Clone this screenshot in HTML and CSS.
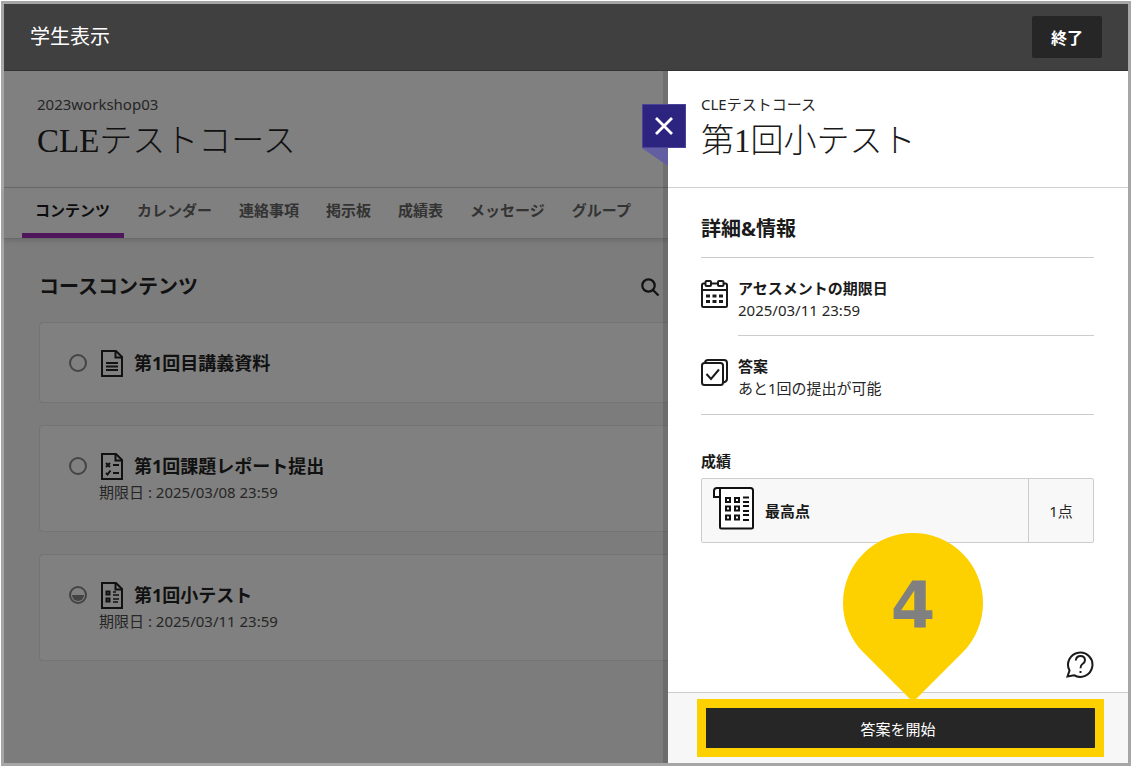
FILE: index.html
```html
<!DOCTYPE html>
<html lang="ja">
<head>
    <meta charset="UTF-8">
    <meta name="viewport" content="width=device-width, initial-scale=1.0">
    <title>第1回小テスト</title>
    <link rel="stylesheet" href="styles.css">
</head>
<body>
    <div class="frame">
        <!-- Student preview bar -->
        <header class="preview-bar">
            <span class="preview-title">学生表示</span>
            <button class="exit-btn" type="button">終了</button>
        </header>

        <div class="workspace">
            <!-- Course page, dimmed behind the panel -->
            <main class="course">
                <div class="course-head">
                    <p class="course-id">2023workshop03</p>
                    <h1 class="title">CLEテストコース</h1>
                </div>

                <nav class="tabs">
                    <a class="tab active" href="#">コンテンツ</a>
                    <a class="tab" href="#">カレンダー</a>
                    <a class="tab" href="#">連絡事項</a>
                    <a class="tab" href="#">掲示板</a>
                    <a class="tab" href="#">成績表</a>
                    <a class="tab" href="#">メッセージ</a>
                    <a class="tab" href="#">グループ</a>
                </nav>

                <section class="contents">
                    <div class="contents-head">
                        <h2>コースコンテンツ</h2>
                        <button class="icon-btn" type="button" aria-label="検索">
                            <svg width="20" height="20" viewBox="0 0 20 20" fill="none" stroke="#111" stroke-width="2.2">
                                <circle cx="8.5" cy="8.5" r="6.2"/>
                                <path d="M13 13l5.5 5.5"/>
                            </svg>
                        </button>
                    </div>

                    <article class="card">
                        <div class="card-row">
                            <span class="status"></span>
                            <svg class="doc-icon" width="22" height="27" viewBox="0 0 22 27" fill="none" stroke="#111" stroke-width="2">
                                <path d="M1 1h14l6 6v19H1z"/>
                                <path d="M14.5 1v6.5H21"/>
                                <path d="M5 13h12M5 16.5h12M5 20h12"/>
                            </svg>
                            <a class="card-title" href="#">第1回目講義資料</a>
                        </div>
                    </article>

                    <article class="card">
                        <div class="card-row">
                            <span class="status"></span>
                            <svg class="doc-icon" width="22" height="27" viewBox="0 0 22 27" fill="none" stroke="#111" stroke-width="2">
                                <path d="M1 1h14l6 6v19H1z"/>
                                <path d="M14.5 1v6.5H21"/>
                                <path d="M5 10l4 4M9 10l-4 4M5 20l1.5 1.5L9.5 17.5M12 12h6M12 20h6"/>
                            </svg>
                            <a class="card-title" href="#">第1回課題レポート提出</a>
                        </div>
                        <p class="due">期限日 : 2025/03/08 23:59</p>
                    </article>

                    <article class="card">
                        <div class="card-row">
                            <span class="status half"></span>
                            <svg class="doc-icon" width="22" height="27" viewBox="0 0 22 27" fill="none" stroke="#111" stroke-width="2">
                                <path d="M1 1h14l6 6v19H1z"/>
                                <path d="M14.5 1v6.5H21"/>
                                <path d="M5.5 9.5h3v3h-3zM5.5 16.5h3v3h-3z"/>
                                <path d="M12 10h3M12 13h6M12 17h6M12 20h5" stroke-width="1.7"/>
                            </svg>
                            <a class="card-title" href="#">第1回小テスト</a>
                        </div>
                        <p class="due">期限日 : 2025/03/11 23:59</p>
                    </article>
                </section>
            </main>

            <!-- Assessment panel -->
            <aside class="panel">
                <button class="close-btn" type="button" aria-label="閉じる">
                    <svg width="20" height="20" viewBox="0 0 20 20" fill="none" stroke="#fff" stroke-width="2.8">
                        <path d="M2 2l16 16M18 2L2 18"/>
                    </svg>
                </button>

                <div class="panel-head">
                    <p class="course-id">CLEテストコース</p>
                    <h1 class="title">第1回小テスト</h1>
                </div>

                <div class="panel-body">
                    <h2>詳細&amp;情報</h2>
                    <div class="detail">
                        <svg width="27" height="28" viewBox="0 0 27 28" fill="none" stroke="#1a1a1a" stroke-width="2">
                            <path d="M4 3.5H2.5Q1 3.5 1 5v20.5Q1 27 2.5 27h22q1.500 0 1.500-1.500V5q0-1.500-1.500-1.500H23M11 3.500h5M1 10h25"/>
                            <rect x="4.5" y="1" width="5.5" height="5" rx="1"/>
                            <rect x="17" y="1" width="5.5" height="5" rx="1"/>
                            <path d="M5 16h4M11.5 16h4M18 16h4M5 21.5h4M11.5 21.5h4M18 21.5h4" stroke-width="3"/>
                        </svg>
                        <div class="detail-text">
                            <h3>アセスメントの期限日</h3>
                            <p>2025/03/11 23:59</p>
                        </div>
                    </div>
                    <div class="detail">
                        <svg width="27" height="28" viewBox="0 0 27 28" fill="none" stroke="#1a1a1a" stroke-width="2">
                            <rect x="1" y="5" width="21" height="22" rx="2.5"/>
                            <path d="M4 4.5Q4.5 2 7 2h16q3 0 3 3v16q0 2.5-3.5 3.5"/>
                            <path d="M5.5 16l4.5 5 8-9.5"/>
                        </svg>
                        <div class="detail-text last">
                            <h3>答案</h3>
                            <p>あと1回の提出が可能</p>
                        </div>
                    </div>

                    <h3 class="grade-label">成績</h3>
                    <div class="grade">
                        <div class="grade-name">
                            <svg width="42" height="44" viewBox="0 0 42 44" stroke="#111" stroke-width="2" fill="#fff">
                                <path d="M7 3v38q0 1.500 1.500 1.500h30q1.500 0 1.500-1.500V4.500Q40 2 37.500 2H4Q1 2 1 5v6h6"/>
                                <path d="M13 12h4v4h-4zM22 12h4v4h-4zM13 20.500h4v4h-4zM22 20.500h4v4h-4zM13 29.500h4v4h-4zM22 29.500h4v4h-4z"/>
                                <path d="M30 11.500h6M30 16h6M30 20h6M30 25h6M30 29h6M30 34h6"/>
                            </svg>
                            <strong>最高点</strong>
                        </div>
                        <div class="grade-points">1点</div>
                    </div>

                    <button class="icon-btn help-btn" type="button" aria-label="ヘルプ">
                        <svg width="28" height="28" viewBox="0 0 28 28" fill="none" stroke="#1a1a1a" stroke-width="2">
                            <path d="M3.500 20.500A12.200 12.200 0 1 1 8 25.200L1.500 26.500z"/>
                            <path d="M9.800 10.500q.5-4.500 4.700-4.500t4.500 4q0 2.500-2.500 4-2 1.200-2 4.200"/>
                            <path d="M13.500 22h2"/>
                        </svg>
                    </button>
                </div>

                <footer class="panel-foot">
                    <div class="start-wrap">
                        <button class="start-btn" type="button">答案を開始</button>
                        <div class="highlight"></div>
                        <div class="pin">
                            <svg width="140" height="170" viewBox="0 0 140 170" fill="#fdd000">
                                <path d="M20.500 119.500A70 70 0 1 1 119.500 119.500L70 169z"/>
                            </svg>
                            <span class="pin-number">4</span>
                        </div>
                    </div>
                </footer>
            </aside>
        </div>
    </div>
</body>
</html>
```
FILE: styles.css
```css
/* General Styles */
* {
    box-sizing: border-box;
}

body {
    margin: 0;
    background: #fff;
    color: #262626;
    font-family: "Noto Sans", "Open Sans", "Noto Sans CJK JP", sans-serif;
    font-size: 15px;
    line-height: 22px;
}

h1, h2, h3, p {
    margin: 0;
}

h2 {
    font-size: 20px;
    line-height: 28px;
    color: #1a1a1a;
}

h3 {
    font-size: 15px;
    line-height: 22px;
    color: #1a1a1a;
}

button {
    border: none;
    padding: 0;
    font-family: inherit;
    cursor: pointer;
}

a {
    color: inherit;
    text-decoration: none;
}

svg {
    display: block;
    flex-shrink: 0;
}

.frame {
    display: flex;
    flex-direction: column;
    min-height: calc(100vh - 2px);
    margin: 1px;
    border: 3px solid #a6a6a6;
}

/* Preview bar */
.preview-bar {
    display: flex;
    align-items: center;
    justify-content: space-between;
    height: 67px;
    padding: 0 26px;
    background: #404040;
    border-bottom: 1px solid #333;
    color: #fff;
}

.preview-title {
    font-size: 20px;
}

.exit-btn {
    width: 70px;
    height: 42px;
    border-radius: 2px;
    background: #262626;
    color: #fff;
    font-size: 16px;
    font-weight: 700;
}

.workspace {
    display: flex;
    flex: 1;
}

/* Dimmed course page */
.course {
    flex: 1;
    min-width: 0;
    display: flex;
    flex-direction: column;
    background: #7c7c7c;
}

.course-head,
.panel-head {
    height: 117px;
    padding: 22px 33px 0;
    border-bottom: 1px solid #d0d0d0;
}

.course-head {
    background: #808080;
    border-bottom-color: #696969;
}

.title {
    font-family: "Liberation Serif", "Noto Sans CJK JP", serif;
    font-size: 33px;
    font-weight: 300;
    line-height: 52px;
    color: #1a1a1a;
    white-space: nowrap;
}

.course .title {
    color: #111;
}

.tabs {
    display: flex;
    height: 51px;
    padding-left: 18px;
    background: #808080;
    border-bottom: 1px solid #6a6a6a;
    box-shadow: 0 2px 5px rgba(0, 0, 0, 0.12);
}

.tab {
    padding: 11px 14px 0 13px;
    border-bottom: 5px solid transparent;
    color: #333;
    font-weight: 700;
    white-space: nowrap;
}

.tab.active {
    border-bottom-color: #4f165c;
    color: #0d0d0d;
}

.contents {
    display: flex;
    flex-direction: column;
    gap: 22px;
    padding: 35px 0 34px 35px;
}

.contents-head {
    display: flex;
    align-items: center;
    justify-content: space-between;
    height: 26px;
    padding-right: 8px;
}

.contents-head h2 {
    color: #111;
}

.icon-btn {
    background: none;
}

.card {
    padding: 27px 29px 26px;
    background: #808080;
    border: 1px solid #747474;
    border-right: none;
    border-radius: 4px 0 0 4px;
}

.card-row {
    display: flex;
    align-items: center;
    height: 26px;
}

.status {
    width: 18px;
    height: 18px;
    margin-right: 14px;
    border: 2px solid #444;
    border-radius: 50%;
}

/* Started but not finished */
.status.half {
    padding: 1px;
    background: linear-gradient(#808080 50%, #444 50%) content-box;
}

.doc-icon {
    margin-right: 11px;
}

.card-title {
    color: #111;
    font-size: 18px;
    font-weight: 700;
}

.due {
    padding-left: 30px;
    line-height: 26px;
}

/* Assessment panel */
.panel {
    position: relative;
    display: flex;
    flex-direction: column;
    width: 460px;
    background: #fff;
    box-shadow: -5px 0 0 rgba(0, 0, 0, 0.12);
}

.close-btn {
    position: absolute;
    top: 33px;
    left: -26px;
    display: flex;
    align-items: center;
    justify-content: center;
    width: 44px;
    height: 44px;
    border: 1px solid #4a4398;
    background: #2c247f;
}

/* Folded ribbon corner */
.close-btn::after {
    content: "";
    position: absolute;
    top: 43px;
    left: -1px;
    border-top: 18px solid #635da1;
    border-left: 26px solid transparent;
}

.panel-body {
    flex: 1;
    display: flex;
    flex-direction: column;
    padding: 27px 34px 14px 33px;
}

.panel-body h2 {
    padding-bottom: 14px;
    border-bottom: 1px solid #ccc;
}

.detail {
    display: flex;
    gap: 10px;
    padding-top: 19px;
}

.detail > svg {
    margin-top: 3px;
}

.detail-text {
    flex: 1;
    padding-bottom: 14px;
    border-bottom: 1px solid #ccc;
}

.detail-text.last {
    margin-left: -37px;
    padding-left: 37px;
    padding-bottom: 15px;
}

.grade-label {
    margin-top: 35px;
}

.grade {
    display: flex;
    height: 65px;
    margin-top: 6px;
    border: 1px solid #ccc;
    border-radius: 2px;
    background: #f8f8f8;
}

.grade-name {
    flex: 1;
    display: flex;
    align-items: center;
    gap: 10px;
    padding: 0 11px;
    color: #1a1a1a;
}

.grade-name svg {
    align-self: flex-start;
    margin-top: 7px;
}

.grade-points {
    display: flex;
    align-items: center;
    justify-content: center;
    width: 65px;
    border-left: 1px solid #ccc;
}

.help-btn {
    align-self: flex-end;
    margin-top: auto;
}

.panel-foot {
    padding: 14px 33px;
    border-top: 1px solid #ccc;
    background: #f7f7f7;
}

.start-wrap {
    position: relative;
}

.start-btn {
    display: block;
    width: 100%;
    height: 42px;
    border-radius: 2px;
    background: #262626;
    color: #fff;
    font-size: 15px;
}

/* Step marker over the start button */
.highlight {
    position: absolute;
    inset: -8px -9px -8px -4px;
    border: 9px solid #fdd000;
    pointer-events: none;
}

.pin {
    position: absolute;
    bottom: 46px;
    left: 142px;
    pointer-events: none;
}

.pin-number {
    position: absolute;
    top: 0;
    left: 0;
    width: 100%;
    color: #808080;
    font-family: "DejaVu Sans", sans-serif;
    font-size: 64px;
    font-weight: 700;
    line-height: 146px;
    text-align: center;
}
```
